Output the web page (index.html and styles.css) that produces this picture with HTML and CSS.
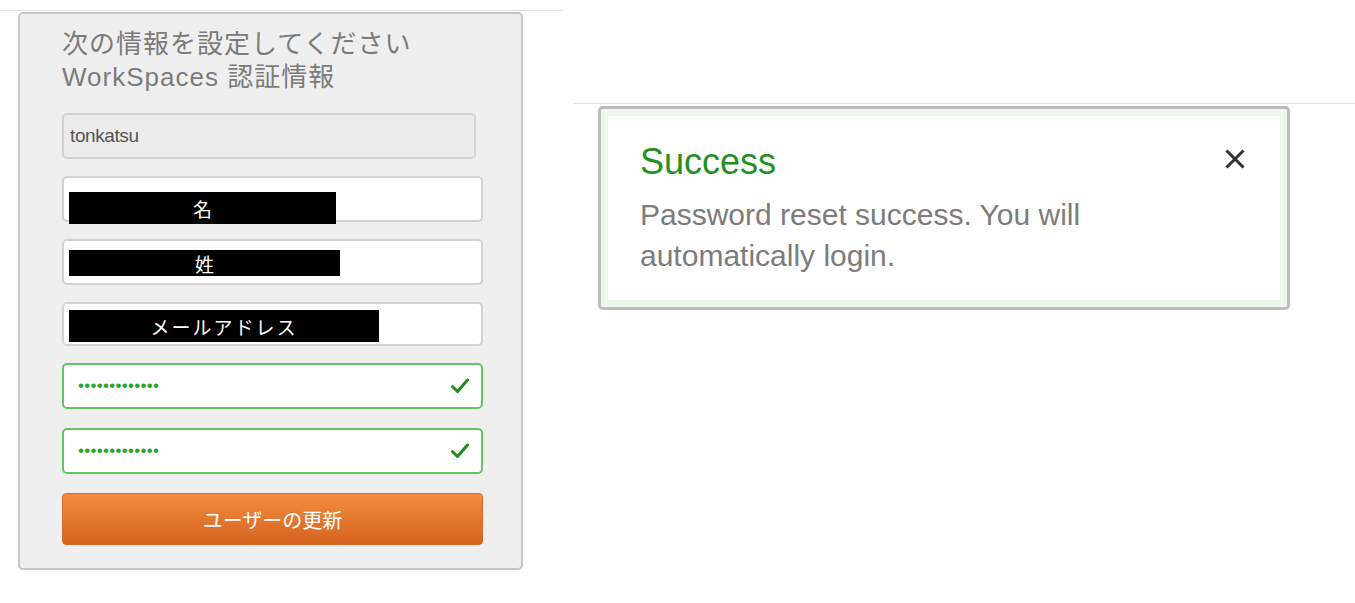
FILE: index.html
```html
<!DOCTYPE html>
<html lang="ja">
<head>
<meta charset="utf-8">
<title>WorkSpaces</title>
<link rel="stylesheet" href="styles.css">
</head>
<body>
<div class="page">
  <div class="left-col">
    <div class="rule"></div>
    <div class="card">
      <h1 class="title">次の情報を設定してください<br>WorkSpaces 認証情報</h1>
      <div class="field readonly"><span class="value">tonkatsu</span></div>
      <div class="field"><span class="redact r1">名</span></div>
      <div class="field"><span class="redact r2">姓</span></div>
      <div class="field short"><span class="redact r3">メールアドレス</span></div>
      <div class="field valid">
        <span class="dots">•••••••••••••</span>
        <svg class="check" width="18" height="16" viewBox="0 0 18 16"><path d="M1.5 8.5 L6.5 13.5 L16.5 2" fill="none" stroke="#1e8c1e" stroke-width="3" stroke-linecap="round" stroke-linejoin="round"/></svg>
      </div>
      <div class="field valid second">
        <span class="dots">•••••••••••••</span>
        <svg class="check" width="18" height="16" viewBox="0 0 18 16"><path d="M1.5 8.5 L6.5 13.5 L16.5 2" fill="none" stroke="#1e8c1e" stroke-width="3" stroke-linecap="round" stroke-linejoin="round"/></svg>
      </div>
      <button class="submit">ユーザーの更新</button>
    </div>
  </div>
  <div class="right-col">
    <div class="rule"></div>
    <div class="alert">
      <div class="alert-head">
        <h2 class="alert-title">Success</h2>
        <svg class="close" width="20" height="20" viewBox="0 0 20 20"><path d="M2.5 2.5 L17.5 17.5 M17.5 2.5 L2.5 17.5" stroke="#333" stroke-width="3" stroke-linecap="square"/></svg>
      </div>
      <p class="alert-text">Password reset success. You will automatically login.</p>
    </div>
  </div>
</div>
</body>
</html>
```

FILE: styles.css
```css
html, body {
  margin: 0;
  padding: 0;
  background: #fff;
}
body {
  font-family: "Liberation Sans", Arial, "Noto Sans CJK JP", sans-serif;
}
.page {
  display: flex;
  align-items: flex-start;
}
.left-col {
  width: 563px;
  padding-top: 10px;
}
.left-col .rule {
  height: 1px;
  background: #e2e2e2;
}
.card {
  margin: 1px 0 0 18px;
  width: 505px;
  box-sizing: border-box;
  border: 2px solid #c6c6c6;
  border-radius: 5px;
  background: #efefef;
  padding: 14px 38px 23px 42px;
  display: flex;
  flex-direction: column;
  gap: 17px;
}
.title {
  margin: 0 0 2px 0;
  font-family: "Liberation Sans", Arial, "Noto Sans CJK JP", sans-serif;
  font-weight: normal;
  font-size: 26px;
  line-height: 33px;
  color: #7b7b7b;
  letter-spacing: 1px;
}
.field {
  position: relative;
  height: 46px;
  box-sizing: border-box;
  border: 2px solid #d2d2d2;
  border-radius: 5px;
  background: #fff;
  display: flex;
  align-items: center;
  padding: 0 12px 0 14px;
}
.field.short {
  height: 44px;
}
.field.second {
  margin-top: 2px;
}
.field.readonly {
  width: 414px;
  background: #ececec;
  padding-left: 6px;
}
.value {
  font-size: 19px;
  color: #555;
  letter-spacing: -0.4px;
}
.redact {
  position: absolute;
  left: 5px;
  background: #000;
  color: #fff;
  font-family: "Noto Sans CJK JP", sans-serif;
  font-size: 19px;
  display: flex;
  align-items: center;
  justify-content: center;
}
.r1 { top: 14px; width: 267px; height: 32px; }
.r2 { top: 9px; width: 271px; height: 26px; }
.r3 { top: 6px; width: 310px; height: 32px; letter-spacing: 2px; }
.field.valid {
  border-color: #62c462;
  justify-content: space-between;
}
.dots {
  color: #2aa52a;
  font-size: 17px;
  letter-spacing: 0.3px;
}
.check {
  display: block;
}
.submit {
  margin-top: 2px;
  height: 52px;
  border: 1px solid #d56c2c;
  border-radius: 4px;
  background: linear-gradient(#f38d40, #d5631f);
  color: #fff;
  font-family: "Noto Sans CJK JP", sans-serif;
  font-size: 20px;
  padding: 0;
}
.right-col {
  flex: 1;
  margin-left: 10px;
  padding-top: 103px;
}
.right-col .rule {
  height: 1px;
  background: #e2e2e2;
}
.alert {
  margin: 2px 0 0 25px;
  width: 692px;
  box-sizing: border-box;
  border: 3px solid #bcbcbc;
  border-radius: 5px;
  box-shadow: inset 0 0 0 7px #eef8ee;
  background: #fff;
  padding: 31px 42px 31px 39px;
}
.alert-head {
  display: flex;
  justify-content: space-between;
  align-items: center;
}
.alert-title {
  margin: 0;
  font-weight: normal;
  font-size: 36px;
  line-height: 44px;
  color: #23901f;
}
.close {
  display: block;
  margin-top: -7px;
}
.alert-text {
  margin: 10px 0 0 0;
  font-size: 30px;
  line-height: 41px;
  color: #7c7c7c;
  max-width: 470px;
}
```
